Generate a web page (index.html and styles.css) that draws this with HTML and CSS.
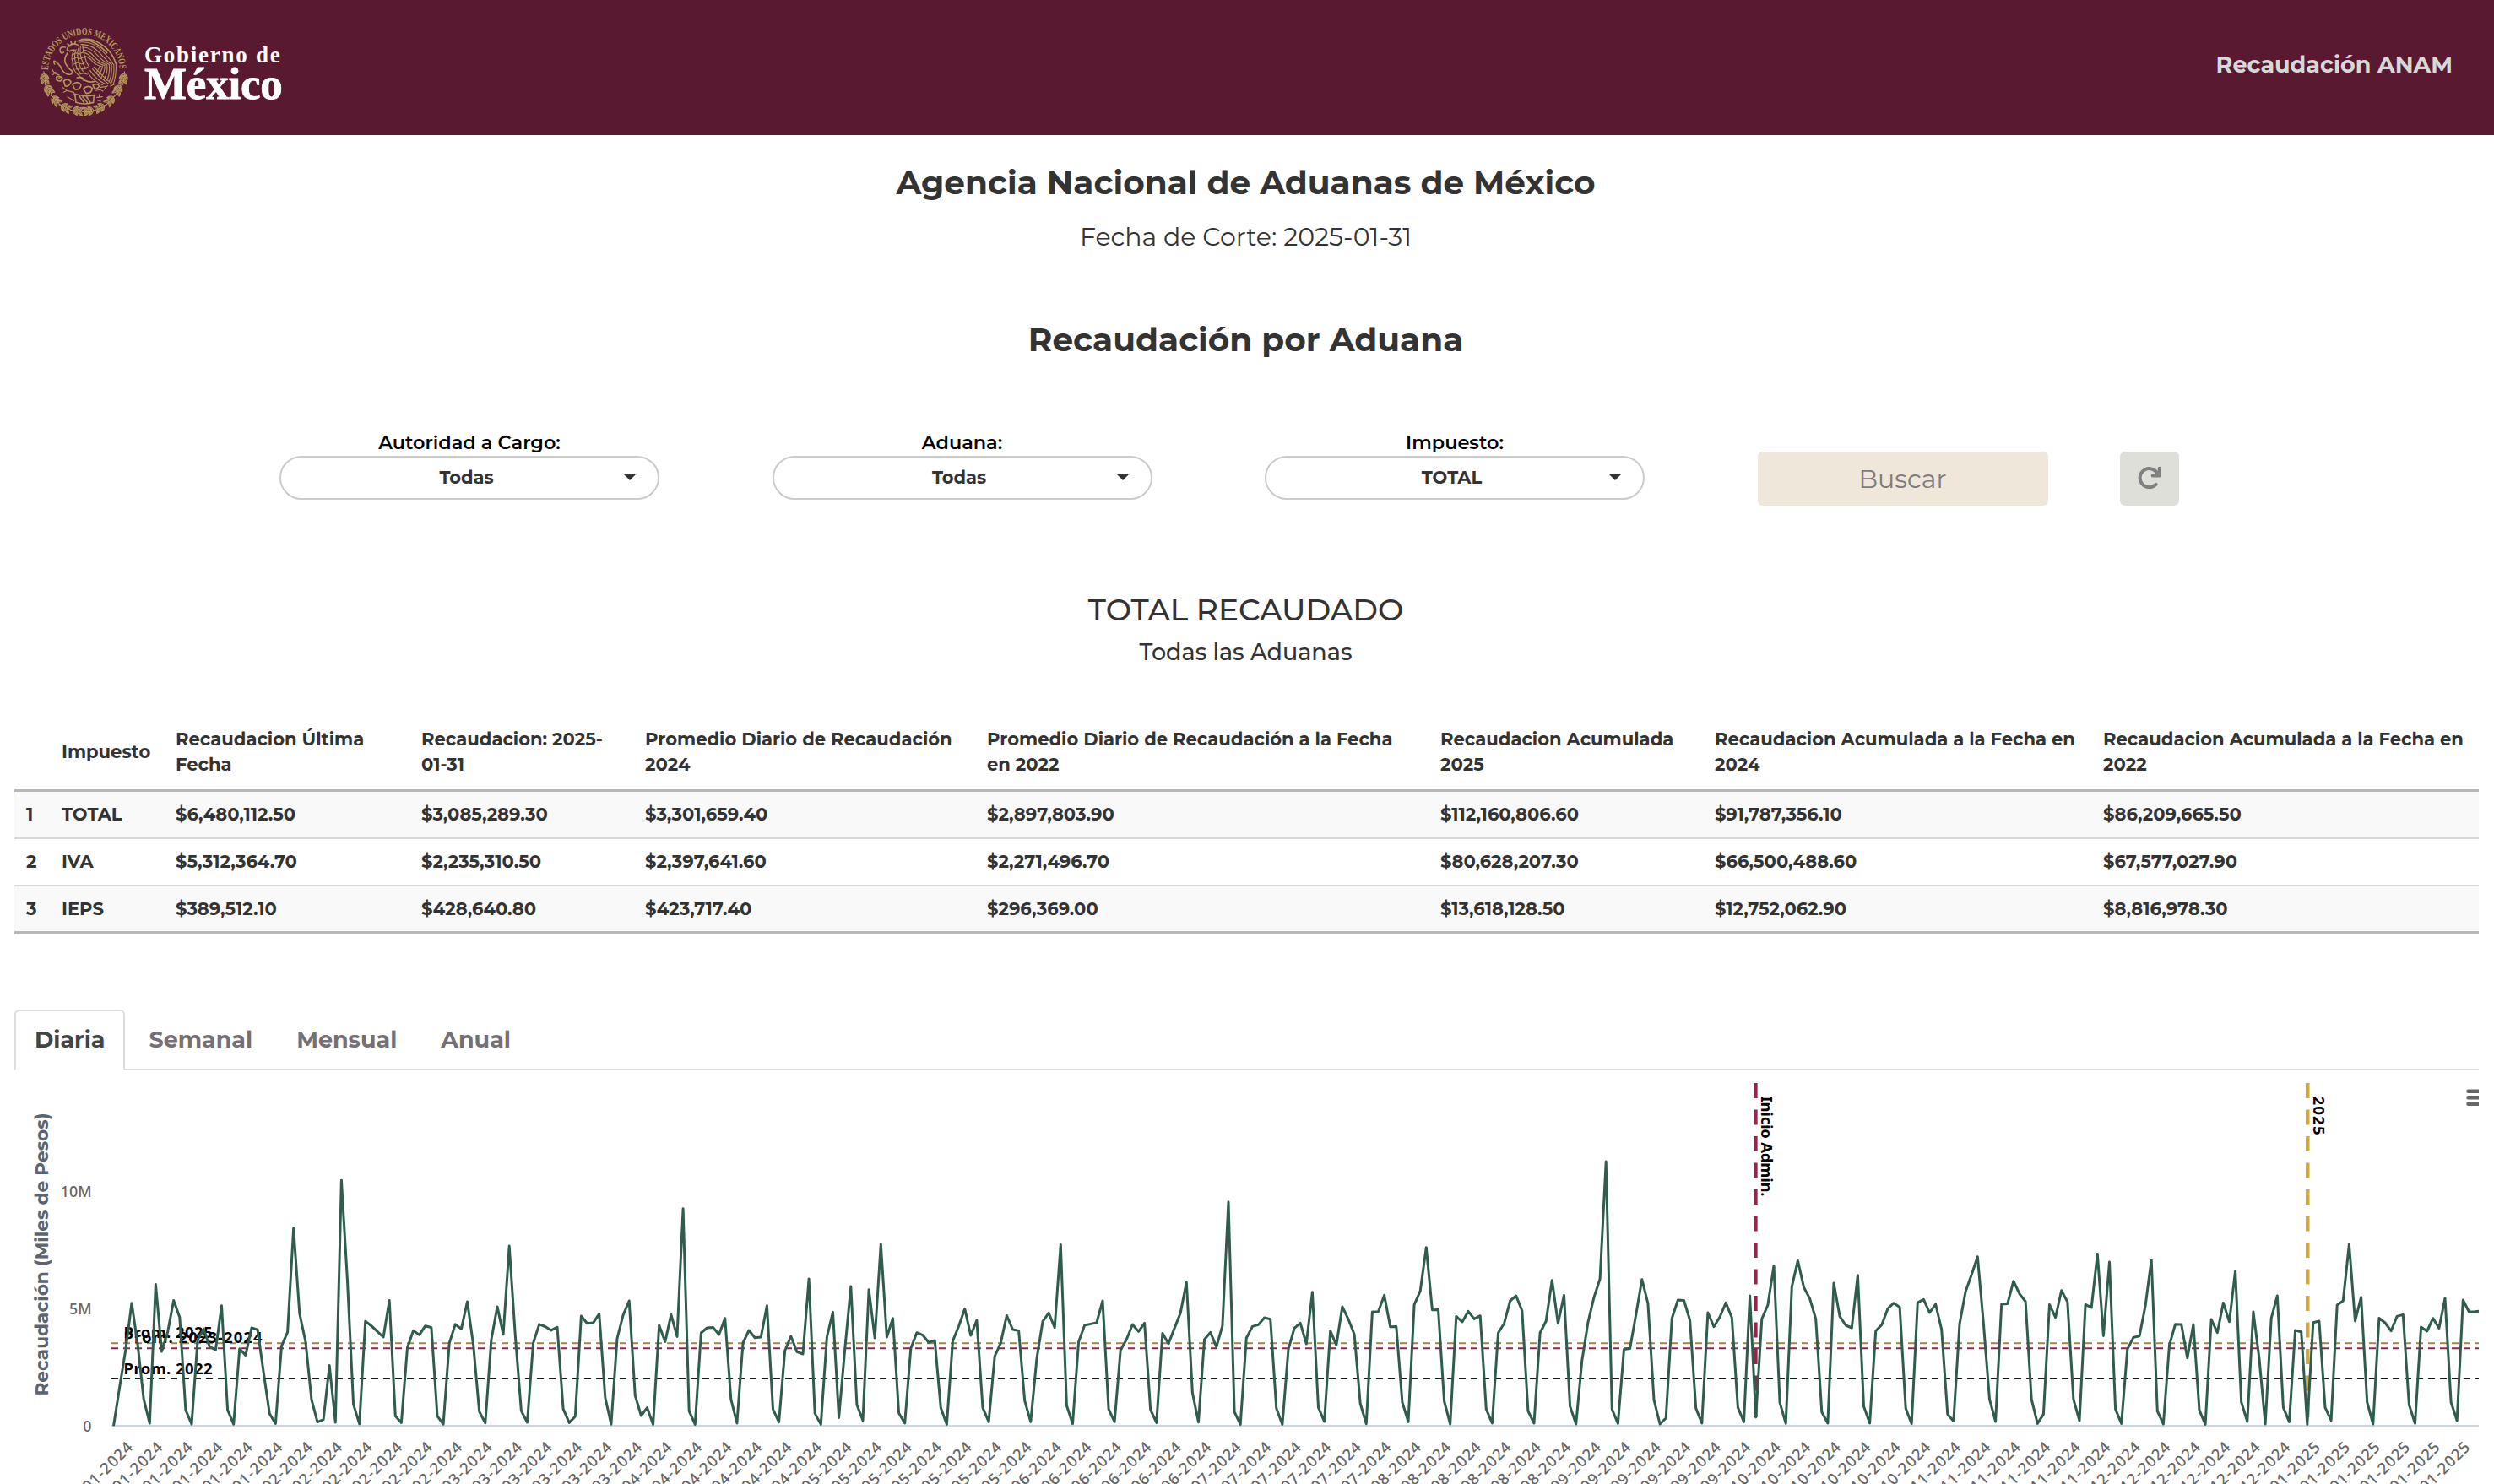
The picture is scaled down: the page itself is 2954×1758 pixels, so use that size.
FILE: index.html
```html
<!DOCTYPE html>
<html lang="es">
<head>
<meta charset="utf-8">
<title>Recaudación ANAM</title>
<link rel="stylesheet" href="styles.css">
</head>
<body>
<header class="topbar">
  <a class="brand" href="#">
    <svg class="emblem" viewBox="0 0 390 390" aria-hidden="true">
      <defs>
        <path id="ring" d="M81 190A127 127 0 1 1 335 190"/>
        <g id="sprig">
          <path d="M-24 0Q-8 -4 24 0M-16 0Q-12 -14 2 -15Q0 -4 -10 0M0 0Q4 -15 20 -14Q16 -3 6 0M-16 0Q-12 14 2 15Q0 4 -10 0M0 0Q4 15 20 14Q16 3 6 0M-10 -4L-2 -12M-10 4L-2 12M6 -4L14 -11M6 4L14 11"/>
        </g>
      </defs>
      <text class="emblem-text" textLength="394" lengthAdjust="spacingAndGlyphs"><textPath href="#ring" textLength="394" lengthAdjust="spacingAndGlyphs">ESTADOS UNIDOS MEXICANOS</textPath></text>
      <g class="emblem-lines">
        <use href="#sprig" transform="translate(68 218) rotate(84)"/>
        <use href="#sprig" transform="translate(82 258) rotate(58)"/>
        <use href="#sprig" transform="translate(107 296) rotate(46)"/>
        <use href="#sprig" transform="translate(142 322) rotate(26)"/>
        <use href="#sprig" transform="translate(184 334) rotate(6)"/>
        <use href="#sprig" transform="translate(226 334) rotate(172)"/>
        <use href="#sprig" transform="translate(266 322) rotate(154)"/>
        <use href="#sprig" transform="translate(302 296) rotate(132)"/>
        <use href="#sprig" transform="translate(330 258) rotate(116)"/>
        <use href="#sprig" transform="translate(349 218) rotate(98)"/>
      </g>
      <g class="emblem-lines">
        <!-- snake -->
        <path class="bold" d="M142 108Q120 104 124 122Q128 134 136 126M150 128Q136 148 142 164Q152 184 166 192Q170 208 150 204Q132 198 126 178Q118 166 106 158Q98 154 104 168"/>
        <path d="M94 184Q104 206 120 206M108 196L98 206M126 214L110 224"/>
        <!-- head and neck -->
        <path class="bold" d="M148 118Q150 98 172 96Q184 96 190 104M148 118L158 122Q166 116 174 118M158 104L150 96M166 98L162 88M176 96L178 86"/>
        <path d="M174 118Q160 140 168 160Q166 186 186 204Q200 218 208 228M180 116Q172 140 178 160Q180 184 196 200M188 112Q182 136 190 160Q192 178 206 194M196 106Q192 130 202 156Q206 172 216 184M204 100Q204 124 214 150Q218 166 226 176M168 134L180 128L192 132L204 126M168 150L182 144L196 148L210 142M172 168L186 162L200 168L214 160M180 186L194 182L208 186L222 178M192 204L206 200L220 204"/>
        <!-- wings -->
        <path class="bold" d="M186 86Q220 70 262 92Q308 118 322 166M200 80Q246 80 290 128"/>
        <path d="M192 90Q240 84 276 124Q304 152 312 168M198 98Q236 96 266 130Q290 156 304 168M202 108Q230 106 256 136Q276 158 296 168M206 118Q226 118 246 142Q262 160 288 170M210 128Q224 130 240 150Q256 166 280 172M212 140Q226 142 240 160Q250 170 270 176"/>
        <path d="M322 166Q324 204 314 236M314 168Q318 204 306 234M306 168Q310 200 298 230M298 168Q302 198 290 226M290 170Q294 196 280 222M282 172Q284 192 270 216M274 174Q274 188 258 210M264 176Q262 186 250 200M244 178Q270 206 304 236M238 184Q260 212 296 238M230 190Q250 222 286 240M222 198Q240 228 274 242"/>
        <!-- prickly pear -->
        <path class="bold" d="M110 214Q124 206 132 218Q128 232 114 226ZM136 228Q150 216 162 230Q158 248 142 246ZM168 240Q184 226 198 240Q196 260 176 258ZM206 256Q222 240 238 254Q236 272 216 272ZM240 242Q256 234 262 246Q258 256 246 256ZM184 216Q204 212 212 226Q228 234 244 230"/>
        <path d="M148 262L172 268L176 282M132 250L148 262L136 268M250 262Q266 256 276 264M268 250L284 248M280 258L292 244M302 246L316 240M150 284L172 298M254 286L274 284M256 296L268 300M264 274L262 284"/>
        <!-- pedestal -->
        <path class="bold" d="M176 274L180 304Q208 314 242 304L244 278Q210 286 176 274M192 282L208 304M204 284L220 304M218 284L230 302"/>
      </g>
    </svg>
    <span class="wordmark"><span class="gob">Gobierno de</span><span class="mex">México</span></span>
  </a>
  <span class="app-name">Recaudación ANAM</span>
</header>

<main>
  <h1 class="title">Agencia Nacional de Aduanas de México</h1>
  <p class="cutoff">Fecha de Corte: 2025-01-31</p>
  <h2 class="title subtitle">Recaudación por Aduana</h2>

  <form class="filters">
    <div class="field"><label>Autoridad a Cargo:</label><div class="select">Todas<i class="caret"></i></div></div>
    <div class="field"><label>Aduana:</label><div class="select">Todas<i class="caret"></i></div></div>
    <div class="field"><label>Impuesto:</label><div class="select">TOTAL<i class="caret"></i></div></div>
    <button class="btn search" type="button">Buscar</button>
    <button class="btn reset" type="button" aria-label="Reiniciar">
      <svg viewBox="0 0 28 28"><path d="M21.5 20.8A11 11 0 1 1 24 9.5"/><path d="M25.7 1.8V10.4H17.6"/></svg>
    </button>
  </form>

  <h3 class="total">TOTAL RECAUDADO</h3>
  <p class="scope">Todas las Aduanas</p>

  <table class="summary">
    <colgroup><col class="c0"><col class="c1"><col class="c2"><col class="c3"><col class="c4"><col class="c5"><col class="c6"><col class="c7"><col class="c8"></colgroup>
    <thead>
      <tr><th></th><th>Impuesto</th><th>Recaudacion Última<br>Fecha</th><th>Recaudacion: 2025-<br>01-31</th><th>Promedio Diario de Recaudación<br>2024</th><th>Promedio Diario de Recaudación a la Fecha<br>en 2022</th><th>Recaudacion Acumulada<br>2025</th><th>Recaudacion Acumulada a la Fecha en<br>2024</th><th>Recaudacion Acumulada a la Fecha en<br>2022</th></tr>
    </thead>
    <tbody>
      <tr><td>1</td><td>TOTAL</td><td>$6,480,112.50</td><td>$3,085,289.30</td><td>$3,301,659.40</td><td>$2,897,803.90</td><td>$112,160,806.60</td><td>$91,787,356.10</td><td>$86,209,665.50</td></tr>
      <tr><td>2</td><td>IVA</td><td>$5,312,364.70</td><td>$2,235,310.50</td><td>$2,397,641.60</td><td>$2,271,496.70</td><td>$80,628,207.30</td><td>$66,500,488.60</td><td>$67,577,027.90</td></tr>
      <tr><td>3</td><td>IEPS</td><td>$389,512.10</td><td>$428,640.80</td><td>$423,717.40</td><td>$296,369.00</td><td>$13,618,128.50</td><td>$12,752,062.90</td><td>$8,816,978.30</td></tr>
    </tbody>
  </table>

  <nav class="tabs">
    <a class="tab active">Diaria</a><a class="tab">Semanal</a><a class="tab">Mensual</a><a class="tab">Anual</a>
  </nav>

  <svg class="chart" viewBox="17 1268 2919 490">
    <text class="axis-title" transform="translate(57 1486) rotate(-90)">Recaudación (Miles de Pesos)</text>
    <g class="y-labels"><text x="108.500" y="1417.500">10M</text><text x="108.500" y="1556.500">5M</text><text x="108.500" y="1696">0</text></g>
    <path class="axis" d="M132 1689H2936"/>
    <path class="avg avg-2025" d="M132 1591.300H2936"/>
    <path class="avg avg-2023" d="M132 1597.300H2936"/>
    <path class="avg avg-2022" d="M132 1633H2936"/>
    <path class="mark mark-admin" d="M2079.400 1283V1680"/>
    <path class="mark mark-year" d="M2733.300 1283V1680"/>
    <g class="avg-labels">
      <text x="146.500" y="1585" textLength="105">Prom. 2025</text>
      <text x="146.500" y="1591" textLength="164">Prom. 2023-2024</text>
      <text x="146.500" y="1627.500" textLength="105">Prom. 2022</text>
      <text transform="translate(2086 1298.500) rotate(90)" textLength="119">Inicio Admin.</text>
      <text transform="translate(2739.500 1298.500) rotate(90)" textLength="46">2025</text>
    </g>
    <polyline class="series" id="daily"/>
    <g class="x-labels" id="dates"></g>
    <path class="menu" d="M2923.500 1292.700H2945M2923.500 1300.200H2945M2923.500 1307.700H2945"/>
  </svg>
</main>
<script src="chart.js"></script>
</body>
</html>
```
FILE: styles.css
```css
* { box-sizing: border-box; }
body { margin: 0; height: 1758px; overflow: hidden; background: #fff; color: #333; font-family: Montserrat, Inter, "Open Sans", sans-serif; }
main { padding-right: 3px; }
h1, h2, h3, p { margin: 0; text-align: center; }

.topbar { display: flex; justify-content: space-between; align-items: center; height: 160px; padding: 0 49px 0 30px; background: #591a31; }
.brand { display: flex; align-items: center; gap: 11px; color: #fff; text-decoration: none; }
.emblem { width: 130px; height: 130px; margin-top: 10px; }
.emblem-text { font: 700 36px "Liberation Serif", serif; fill: #b59758; }
.emblem-lines { fill: none; stroke: #b3945a; stroke-width: 3.4; stroke-linecap: round; stroke-linejoin: round; }
.emblem-lines .bold { stroke-width: 5; }
.wordmark { display: flex; flex-direction: column; padding-top: 8px; font-family: "Liberation Serif", serif; font-weight: 700; }
.gob { font-size: 27px; line-height: 30px; letter-spacing: 1.75px; }
.mex { font-size: 53px; line-height: 38px; letter-spacing: -0.2px; -webkit-text-stroke: 0.8px #fff; }
.app-name { margin-bottom: 6px; font-size: 27px; font-weight: 700; line-height: 34px; color: #d6d8d9; }

.title { margin-top: 32px; font-size: 39px; font-weight: 700; line-height: 48px; }
.cutoff { margin-top: 23px; font-size: 30px; line-height: 36px; }
.subtitle { margin-top: 79px; }

.filters { display: flex; align-items: flex-end; height: 88px; margin-top: 85px; padding-left: 331px; }
.field { flex: none; width: 450px; margin: 0 133.500px 7px 0; }
.field label { display: block; margin-bottom: 3px; font-size: 22.400px; font-weight: 600; line-height: 26px; color: #000; text-align: center; }
.select { position: relative; height: 52px; padding-right: 7px; border: 2px solid #ccc; border-radius: 26px; font-size: 21px; font-weight: 700; line-height: 48px; text-align: center; }
.caret { position: absolute; top: 20px; right: 26px; border: 7px solid transparent; border-top-color: #333; border-bottom: 0; }
.btn { height: 64px; padding: 0; border: 0; border-radius: 6px; font: 400 30px/66px Montserrat, Inter, sans-serif; color: #7c7c7c; }
.search { width: 344px; background: #eee7da; }
.reset { display: flex; align-items: center; justify-content: center; width: 70px; margin-left: 85px; background: #dfdfda; }
.reset svg { width: 28px; height: 28px; fill: none; stroke: #808080; stroke-width: 4; stroke-linecap: round; stroke-linejoin: round; overflow: visible; }

.total { margin-top: 101px; font-size: 36px; font-weight: 500; line-height: 44px; }
.scope { margin-top: 13px; font-size: 27px; font-weight: 500; line-height: 32px; }

.summary { width: 2919px; margin: 56px 0 0 17px; table-layout: fixed; border-collapse: separate; border-spacing: 0; font-size: 21.100px; font-weight: 700; line-height: 30px; text-align: left; }
.c0 { width: 44px; } .c1 { width: 135px; } .c2 { width: 291px; } .c3 { width: 265px; } .c4 { width: 405px; } .c5 { width: 537px; } .c6 { width: 325px; } .c7 { width: 460px; } .c8 { width: 457px; }
.summary th, .summary td { padding: 0 0 0 12px; white-space: nowrap; }
.summary th { height: 93px; padding-top: 2px; border-bottom: 3px solid #b8b8b8; }
.summary td { height: 56px; border-bottom: 2px solid #d9d9d9; }
.summary td:first-child { padding-left: 14px; }
.summary tbody tr:nth-child(odd) { background: #f9f9f9; }
.summary tbody tr:last-child td { border-bottom: 3px solid #b8b8b8; }

.tabs { display: flex; height: 72px; margin: 90px 15px 0 17px; border-bottom: 2px solid #ddd; font-size: 27px; font-weight: 700; }
.tab { height: 72px; margin-right: 4px; padding: 0 22px; border: 2px solid transparent; border-radius: 6px 6px 0 0; line-height: 68px; color: #757075; }
.tab.active { border-color: #ddd #ddd #fff; background: #fff; color: #444; }

.chart { display: block; width: 2919px; height: 490px; margin-left: 17px; }
.axis-title { font-size: 21.650px; font-weight: 700; fill: #5b6570; text-anchor: middle; }
.y-labels, .x-labels, .avg-labels { font-family: "Noto Sans", "Open Sans", sans-serif; }
.y-labels { font-size: 17.800px; font-weight: 500; fill: #666; text-anchor: end; }
.x-labels { font-size: 18.500px; font-weight: 500; letter-spacing: 0.9px; fill: #666; text-anchor: end; }
.avg-labels { font-size: 18.500px; font-weight: 700; fill: #000; }
.axis { stroke: #ccd6eb; stroke-width: 2; }
.avg { stroke-width: 2; stroke-dasharray: 8 6; }
.avg-2025 { stroke: #a5853f; }
.avg-2023 { stroke: #8f2648; }
.avg-2022 { stroke: #161a1d; }
.mark { stroke-width: 4.500; stroke-dasharray: 18 13.500; }
.mark-admin { stroke: #95264a; }
.mark-year { stroke: #d3a843; }
.series { fill: none; stroke: #2f5c4f; stroke-width: 3; stroke-linejoin: round; stroke-linecap: round; }
.menu { stroke: #666; stroke-width: 4.500; stroke-linecap: round; }
```
FILE: chart.js
```js
// Daily revenue, 1 Jan 2024 to 31 Jan 2025, as heights on two plotting grids.
const parts = [
  { zero: 1380, unit: 2.713, y: [
    1378,1255,1135,987,1120,1295,1373,926,1142,1080,978,1032,1330,1376,1105,1070,1127,1137,995,1330,
    1376,1133,1154,1066,1072,1210,1342,1374,1125,1080,746,1020,1110,1297,1369,1361,1187,1370,592,915,
    1312,1375,1045,1060,1078,1096,978,1350,1371,1130,1075,1089,1060,1065,1350,1376,1115,1055,1070,982,
    1120,1335,1372,1105,998,1087,803,1090,1333,1370,1115,1055,1062,1074,1064,1327,1371,1351,1028,1052,
    1050,1021,1290,1376,1100,1025] },
  { zero: 1286, unit: 3, y: [
    843,1180,1251,1223,1282,930,988,892,970,515,1235,1282,957,939,937,963,905,1193,1278,993,
    948,974,972,860,1228,1274,1020,969,1024,1032,765,1243,1282,972,883,1258,1015,792,1212,1268,
    803,975,642,972,905,1242,1278,1012,956,965,991,984,1223,1282,985,933,871,966,912,1223,
    1273,1040,993,895,945,949,1198,1273,1050,917,886,938,643,1215,1280,988,930,925,921,843,
    1228,1273,1018,980,927,952,922,1230,1276,958,995,940,886,777,1170,1274,980,955,1007,932,
    491,1238,1282,975,934,928,903,908,1225,1282,1015,940,922,996,812,1222,1272,950,1000,864,
    908,962,1208,1280,882,881,823,935,934,1203,1273,857,808,653,875,874,1200,1281,898,918,
    880,907,896,1228,1278,957,923,843,825,878,1235,1278,957,915,770,923,823,1218,1281,1055,
    920,830,765,348,1228,1279,1015,1012,892,767,852,1195,1281,1260,905,840,841,912,1225,1278,
    885,935,900,850,903,1222,1273,825,1257,907,858,718,1205,1279,793,700,795,835,907,1238,
    1278,780,898,930,939,752,1218,1278,950,928,871,851,865,1225,1280,849,838,885,855,945,
    1246,1270,925,810,750,686,925,1193,1272,855,853,773,818,845,1193,1279,1246,856,902,806,
    847,1193,1269,856,867,676,967,705,1228,1279,1015,973,968,860,697,1235,1281,1000,926,927,
    1046,927,1232,1282,909,956,850,917,737,1203,1272,882,1050,1281,905,825,1222,1273,948,953,
    1282,920,915,1222,1268,858,843,642,915,830,1203,1281,904,921,950,898,892,1212,1279,936,
    951,905,940,834,1203,1269,840,882,881,879,879] }
];
const x0 = 134.7, step = 7.0985, base = 1688.7;
const heights = parts.flatMap(p => p.y.map(v => (p.zero - v) / p.unit));
document.getElementById('daily').setAttribute('points',
  heights.map((h, i) => (x0 + i * step).toFixed(1) + ',' + (base - h).toFixed(1)).join(' '));

// One date label every five days.
const dates = document.getElementById('dates');
for (let i = 1; i < 396; i += 5) {
  const d = new Date(Date.UTC(2024, 0, 1 + i)).toISOString().slice(0, 10).split('-').reverse().join('-');
  const t = document.createElementNS('http://www.w3.org/2000/svg', 'text');
  t.setAttribute('transform', `translate(${(x0 + i * step + 17).toFixed(1)} 1715) rotate(-45)`);
  t.textContent = d;
  dates.append(t);
}
```
